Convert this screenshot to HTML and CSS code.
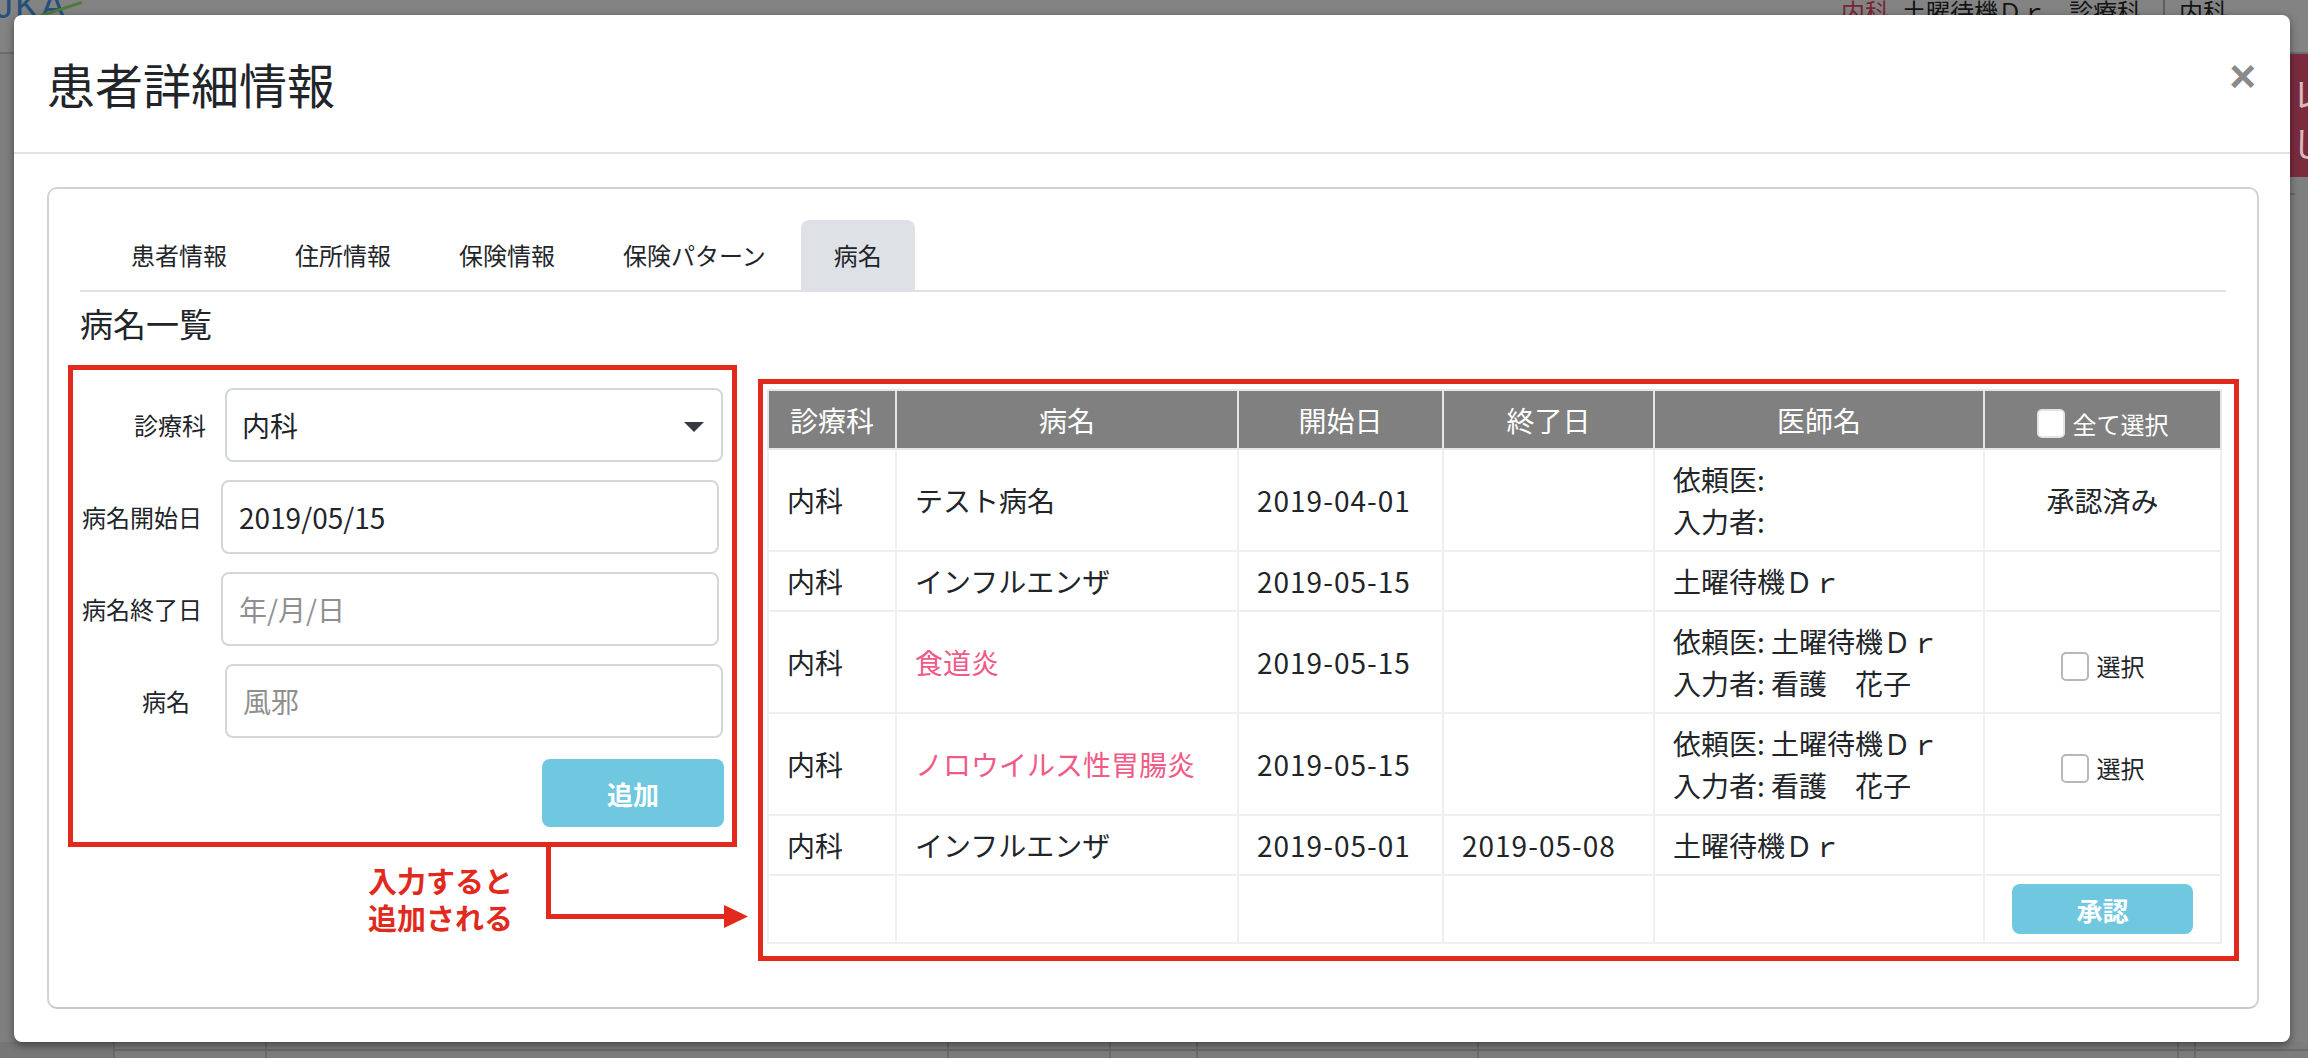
FILE: index.html
```html
<!DOCTYPE html>
<html lang="ja">
<head>
<meta charset="utf-8">
<title>患者詳細情報</title>
<link rel="stylesheet" href="styles.css">
</head>
<body>
<div class="page">
  <header class="page-top">
    <div class="logo"><span class="logo-text">JKA</span><span class="logo-swoosh"></span></div>
    <div class="top-info">
      <span class="top-dept">内科</span>
      <span class="top-name">土曜待機Ｄｒ</span>
      <span class="top-label">診療科</span>
      <span class="top-sep"></span>
      <span class="top-val">内科</span>
    </div>
  </header>
  <div class="page-mid">
    <div class="side-badge">レ<br>し</div>
  </div>
  <div class="page-bottom">
    <div class="bcell bcell-first"></div>
    <div class="bcell"></div>
    <div class="bcell"></div>
    <div class="bcell"></div>
    <div class="bcell"></div>
    <div class="bcell"></div>
    <div class="bcell"></div>
    <div class="bcell"></div>
    <div class="bcell"></div>
  </div>
</div>

<div class="modal">
  <div class="modal-header">
    <h1 class="modal-title">患者詳細情報</h1>
    <button class="close" type="button">×</button>
  </div>
  <div class="modal-body">
    <div class="card">
      <ul class="tabs">
        <li class="tab">患者情報</li>
        <li class="tab">住所情報</li>
        <li class="tab">保険情報</li>
        <li class="tab">保険パターン</li>
        <li class="tab active">病名</li>
      </ul>
      <h2 class="section-title">病名一覧</h2>
      <div class="content-row">
        <form class="entry-box">
          <div class="form-row">
            <label class="form-label">診療科</label>
            <div class="select-wrap">
              <select class="form-control form-select"><option>内科</option></select>
              <span class="select-arrow"></span>
            </div>
          </div>
          <div class="form-row form-row-date">
            <label class="form-label">病名開始日</label>
            <input class="form-control" type="text" value="2019/05/15">
          </div>
          <div class="form-row form-row-date">
            <label class="form-label">病名終了日</label>
            <input class="form-control" type="text" placeholder="年/月/日">
          </div>
          <div class="form-row">
            <label class="form-label form-label-short">病名</label>
            <input class="form-control" type="text" placeholder="風邪">
          </div>
          <div class="form-actions">
            <button class="btn-info" type="button">追加</button>
          </div>
        </form>
        <div class="table-box">
          <table class="disease-table">
            <colgroup>
              <col class="c1"><col class="c2"><col class="c3"><col class="c4"><col class="c5"><col class="c6">
            </colgroup>
            <thead>
              <tr>
                <th>診療科</th>
                <th>病名</th>
                <th>開始日</th>
                <th>終了日</th>
                <th>医師名</th>
                <th><label class="check-label"><input class="cb cb-head" type="checkbox">全て選択</label></th>
              </tr>
            </thead>
            <tbody>
              <tr>
                <td>内科</td>
                <td>テスト病名</td>
                <td class="date">2019-04-01</td>
                <td></td>
                <td>依頼医:<br>入力者:</td>
                <td class="center">承認済み</td>
              </tr>
              <tr>
                <td>内科</td>
                <td>インフルエンザ</td>
                <td class="date">2019-05-15</td>
                <td></td>
                <td>土曜待機Ｄｒ</td>
                <td></td>
              </tr>
              <tr>
                <td>内科</td>
                <td class="new">食道炎</td>
                <td class="date">2019-05-15</td>
                <td></td>
                <td>依頼医: 土曜待機Ｄｒ<br>入力者: 看護　花子</td>
                <td class="center"><label class="check-label"><input class="cb" type="checkbox">選択</label></td>
              </tr>
              <tr>
                <td>内科</td>
                <td class="new">ノロウイルス性胃腸炎</td>
                <td class="date">2019-05-15</td>
                <td></td>
                <td>依頼医: 土曜待機Ｄｒ<br>入力者: 看護　花子</td>
                <td class="center"><label class="check-label"><input class="cb" type="checkbox">選択</label></td>
              </tr>
              <tr>
                <td>内科</td>
                <td>インフルエンザ</td>
                <td class="date">2019-05-01</td>
                <td class="date">2019-05-08</td>
                <td>土曜待機Ｄｒ</td>
                <td></td>
              </tr>
              <tr class="action-row">
                <td></td>
                <td></td>
                <td></td>
                <td></td>
                <td></td>
                <td class="center"><button class="btn-info btn-approve" type="button">承認</button></td>
              </tr>
            </tbody>
          </table>
        </div>
      </div>
      <div class="annotation">
        <svg class="annotation-arrow" width="220" height="95" viewBox="0 0 220 95">
          <polyline points="11.5,2 11.5,75.5 189,75.5" fill="none" stroke="#e2291d" stroke-width="5" stroke-linejoin="miter"/>
          <polygon points="187,64 211,75.5 187,87" fill="#e2291d"/>
        </svg>
        <div class="annotation-text">入力すると<br>追加される</div>
      </div>
    </div>
  </div>
</div>
</body>
</html>
```

FILE: styles.css
```css
* { box-sizing: border-box; }

html, body {
  margin: 0;
  padding: 0;
}

body {
  width: 2308px;
  height: 1058px;
  overflow: hidden;
  position: relative;
  background: #7f7f7f;
  font-family: "Noto Sans CJK JP", "Noto Sans", sans-serif;
  color: #212529;
}

/* ---------- dimmed background page ---------- */
.page {
  height: 1058px;
  display: flex;
  flex-direction: column;
}

.page-top {
  height: 54px;
  flex: none;
  background: #838383;
  border-bottom: 2px solid #6d6d6d;
  display: flex;
  justify-content: space-between;
  align-items: flex-start;
  overflow: hidden;
}

.logo {
  display: flex;
  align-items: flex-start;
  margin-top: -14px;
  margin-left: -5px;
}

.logo-text {
  font-family: "Liberation Sans", sans-serif;
  font-size: 36px;
  line-height: 40px;
  color: #23507c;
  letter-spacing: 2px;
}

.logo-swoosh {
  width: 46px;
  height: 3px;
  background: #4e7a3a;
  margin-top: 22px;
  margin-left: -30px;
  transform: rotate(-18deg);
}

.top-info {
  display: flex;
  align-items: center;
  margin-top: -9px;
  padding-right: 81px;
  font-size: 24px;
  line-height: 32px;
  color: #141414;
}

.top-dept { color: #7a2434; margin-right: 13px; }
.top-name { margin-right: 23px; }
.top-label { margin-right: 22px; }
.top-sep {
  width: 2px;
  height: 40px;
  background: #5f5f5f;
  margin-right: 14px;
}

.page-mid {
  flex: 1;
  display: flex;
  justify-content: flex-end;
  align-items: flex-start;
}

.side-badge {
  width: 70px;
  height: 139px;
  background: #7b2b3e;
  color: #d9b9c1;
  font-size: 34px;
  line-height: 50px;
  padding: 14px 0 0 54px;
  overflow: hidden;
  border-bottom: 16px solid #7f7f7f;
  box-shadow: 0 15px 0 -13px #6a6a6a;
}

.page-bottom {
  height: 16px;
  flex: none;
  display: grid;
  grid-template-columns: 113px 152px 682px 162px 87px 281px 700px 17px 1fr;
  background: #7c7c7c;
}

.bcell {
  border-left: 2px solid #6a6a6a;
  padding-top: 7px;
}

.bcell::after {
  content: "";
  display: block;
  border-top: 2px solid #6a6a6a;
}

.bcell-first {
  border-left: none;
  background: #767676;
}

.bcell-first::after { display: none; }

/* ---------- modal ---------- */
.modal {
  position: absolute;
  left: 14px;
  top: 15px;
  width: 2276px;
  height: 1027px;
  background: #fff;
  border-radius: 8px;
  box-shadow: 0 3px 9px rgba(0, 0, 0, 0.45);
  display: flex;
  flex-direction: column;
}

.modal-header {
  height: 139px;
  flex: none;
  border-bottom: 2px solid #dee2e6;
  display: flex;
  justify-content: space-between;
  align-items: center;
  padding: 0 34px 0 33px;
}

.modal-title {
  margin: -2px 0 0;
  font-size: 48px;
  font-weight: 400;
  line-height: 58px;
  color: #212529;
}

.close {
  align-self: flex-start;
  margin-top: 38px;
  padding: 0;
  border: none;
  background: none;
  font-family: "Liberation Sans", sans-serif;
  font-size: 46px;
  font-weight: 700;
  line-height: 46px;
  color: #8a8a8a;
}

.modal-body {
  flex: 1;
  padding: 33px;
  display: flex;
}

.card {
  flex: 1;
  position: relative;
  border: 2px solid #d2d2d2;
  border-bottom-color: #c8c8c8;
  border-radius: 10px;
  padding: 31px 31px;
}

/* ---------- tabs ---------- */
.tabs {
  list-style: none;
  margin: 0;
  padding: 0 0 0 18px;
  display: flex;
  gap: 2px;
  border-bottom: 2px solid #dee2e6;
}

.tab {
  padding: 0 33px;
  font-size: 24px;
  line-height: 70px;
  color: #212529;
  border-radius: 8px 8px 0 0;
}

.tab.active {
  background: #dee2e6;
}

.section-title {
  margin: 11px 0 0;
  font-size: 33px;
  font-weight: 400;
  line-height: 40px;
}

/* ---------- content ---------- */
.content-row {
  display: flex;
  align-items: flex-start;
  gap: 21px;
  margin: 22px -13px 0 -12px;
}

.entry-box {
  width: 669px;
  flex: none;
  border: 5px solid #e2291d;
  padding: 18px 9px 15px 0;
  margin: 0;
}

.form-row {
  display: flex;
  align-items: center;
  margin-bottom: 18px;
}

.form-label {
  flex: none;
  width: 152px;
  padding-right: 19px;
  text-align: right;
  font-size: 24px;
  line-height: 32px;
  color: #212529;
}

.form-label-short { padding-right: 35px; }

.form-row-date .form-label { width: 148px; }
.form-row-date .form-control { margin-right: 4px; }

.form-control {
  flex: 1;
  min-width: 0;
  height: 74px;
  border: 2px solid #d3d7db;
  border-radius: 8px;
  padding: 0 16px;
  font-family: inherit;
  font-size: 28px;
  color: #212529;
  background: #fff;
  outline: none;
}

.form-control::placeholder { color: #8f8f8f; }

.select-wrap {
  flex: 1;
  position: relative;
  display: flex;
}

.form-select {
  width: 100%;
  -webkit-appearance: none;
  appearance: none;
  padding-left: 15px;
}

.select-arrow {
  position: absolute;
  right: 19px;
  top: 34px;
  width: 0;
  height: 0;
  border-left: 10px solid transparent;
  border-right: 10px solid transparent;
  border-top: 10px solid #343a40;
}

.form-actions {
  display: flex;
  justify-content: flex-end;
  margin-top: 21px;
}

.btn-info {
  border: none;
  border-radius: 8px;
  background: #6fc8e0;
  color: #fff;
  font-family: inherit;
  font-weight: 700;
  font-size: 26px;
  padding: 0;
}

.form-actions .btn-info {
  width: 182px;
  height: 68px;
  margin-right: -1px;
}

.table-box {
  flex: 1;
  margin-top: 14px;
  border: 5px solid #e2291d;
  padding: 5px 12px 12px 4px;
}

.disease-table {
  width: 100%;
  border-collapse: collapse;
  table-layout: fixed;
  font-size: 28px;
  line-height: 42px;
}

.c1 { width: 128px; }
.c2 { width: 342px; }
.c3 { width: 205px; }
.c4 { width: 211px; }
.c5 { width: 330px; }
.c6 { width: 237px; }

.disease-table th {
  height: 59px;
  background: #808080;
  color: #fff;
  font-weight: 400;
  text-align: center;
  padding: 0 6px;
  border: 2px solid #e6e6e6;
  white-space: nowrap;
  vertical-align: middle;
}

.disease-table td {
  padding: 8px 18px;
  border: 2px solid #efefef;
  vertical-align: middle;
  white-space: nowrap;
  color: #212529;
}

.disease-table td.date { letter-spacing: 1px; }

.disease-table td.center {
  text-align: center;
  padding-left: 6px;
  padding-right: 6px;
}

.disease-table td.new { color: #ef5b86; }

.check-label {
  display: inline-flex;
  align-items: center;
  vertical-align: middle;
  gap: 8px;
  font-size: 24px;
  line-height: 30px;
}

.cb {
  -webkit-appearance: none;
  appearance: none;
  width: 28px;
  height: 29px;
  margin: 0;
  border: 2px solid #b8b8b8;
  border-radius: 5px;
  background: #fff;
}

.cb-head { border-color: #e4e4e4; }

.btn-approve {
  width: 181px;
  height: 50px;
  vertical-align: middle;
}

.action-row td { height: 68px; padding-top: 0; padding-bottom: 0; }

/* ---------- annotation ---------- */
.annotation-arrow {
  position: absolute;
  left: 488px;
  top: 652px;
}

.annotation-text {
  position: absolute;
  left: 319px;
  top: 673px;
  font-size: 29px;
  font-weight: 700;
  line-height: 37px;
  color: #e2291d;
}
```
